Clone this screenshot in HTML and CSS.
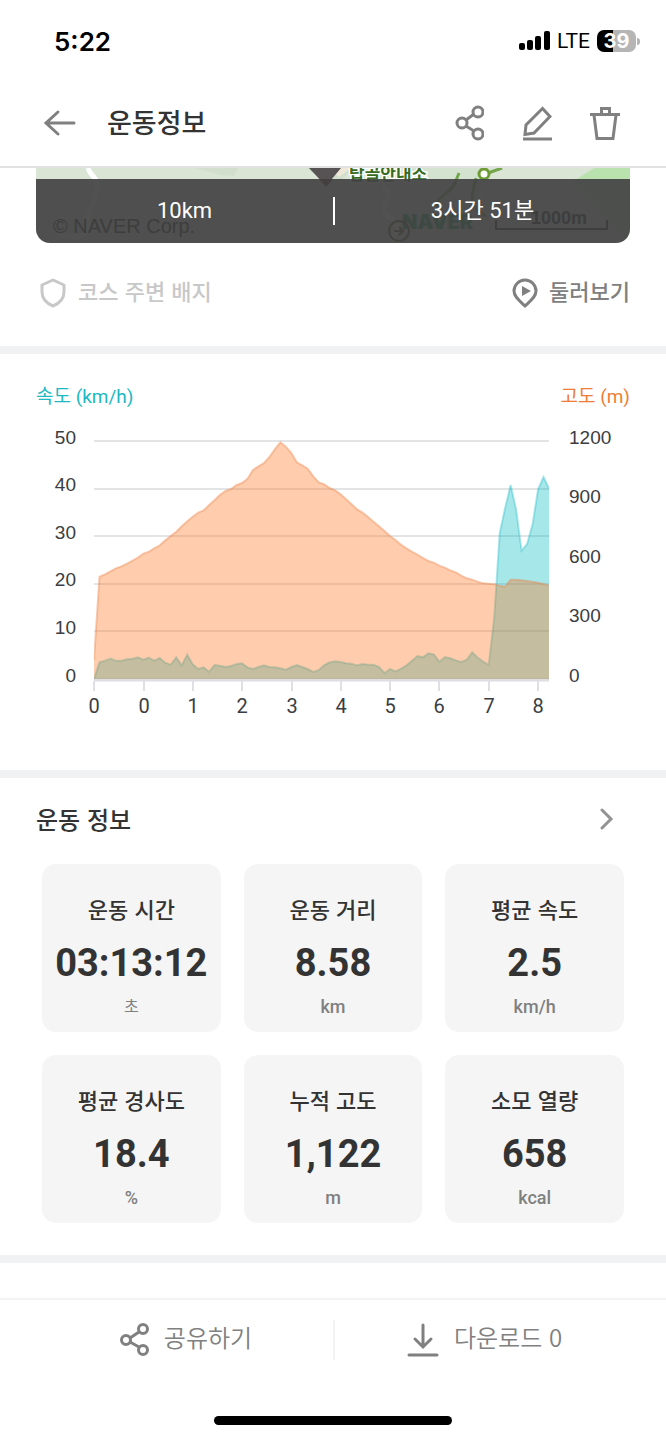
FILE: index.html
```html
<!DOCTYPE html>
<html lang="ko">
<head>
<meta charset="utf-8">
<meta name="viewport" content="width=device-width, initial-scale=1">
<title>운동정보</title>
<link rel="stylesheet" href="styles.css">
</head>
<body>
<div class="status">
  <span class="clock">5:22</span>
  <div class="status-right">
    <svg width="31" height="20" viewBox="0 0 31 20" aria-hidden="true"><rect x="0" y="12" width="6" height="7" rx="2"/><rect x="8" y="9" width="6" height="10" rx="2"/><rect x="16" y="5" width="6" height="14" rx="2"/><rect x="25" y="0" width="6" height="19" rx="2"/></svg>
    <span class="network">LTE</span>
    <span class="battery">39</span>
  </div>
</div>
<header class="header">
  <button class="icon-button" aria-label="뒤로">
    <svg width="34" height="28" viewBox="0 0 34 28" class="stroke"><path d="M31 14H3M15 3 3 14l12 11" stroke-width="3" stroke-linecap="round"/></svg>
  </button>
  <h1 class="title">운동정보</h1>
  <div class="actions">
    <button class="icon-button" aria-label="공유">
      <svg width="30" height="36" viewBox="0 0 30 36" class="stroke" stroke-width="3"><circle cx="8" cy="18" r="5"/><circle cx="24" cy="7" r="5"/><circle cx="24" cy="29" r="5"/><path d="m12 15 8-6M12 21l8 5"/></svg>
    </button>
    <button class="icon-button" aria-label="편집">
      <svg width="30" height="36" viewBox="0 0 30 36" class="stroke" stroke-width="3"><path d="M20.500 3.500 4 20 3 29.500l9-1.500L28 11.500ZM1 34h29"/></svg>
    </button>
    <button class="icon-button" aria-label="삭제">
      <svg width="30" height="36" viewBox="0 0 30 36" class="stroke" stroke-width="3"><path d="M0 9.500h30M4 10l3 23.500h16L26 10M11.500 9V3.500h8V9"/></svg>
    </button>
  </div>
</header>
<main class="content">
  <section class="course">
    <div class="map">
      <svg class="map-art" viewBox="0 0 594 75" preserveAspectRatio="none" aria-hidden="true">
        <rect width="594" height="75" fill="#dae5d5"/>
        <path d="M160 0h42l-4 8-14-1zM270 0h50l-14 11h-20z" fill="#d2dfcc"/>
        <path d="M330 0h115l-25 75h-90z" fill="#d4e2d0"/>
        <path d="m558 0-22 14 58 61V0z" fill="#b9e2ae"/>
        <path d="M52 0c3 10 12 8 8 26s-10 18-8 30-12 16-30 10" fill="none" stroke="#fff" stroke-width="5"/>
        <path d="M346 18c20 12-12 20 8 32s-10 22 10 24" fill="none" stroke="#fff" stroke-width="5"/>
        <path d="m423 5-4 10c-6 12-20 14-18 24M440 10c-2 14-12 26 10 38M452 5l14-5" fill="none" stroke="#73a54b" stroke-width="3"/>
        <circle cx="448" cy="6" r="5" fill="#fff" stroke="#6d9d32" stroke-width="3"/>
        <path d="M293 0h22l-12 9z" fill="#eee8d8"/>
        <path d="m290 18-17-18h32z" fill="#575254"/>
        <path d="m283 11 7 8 7-8z" fill="#5b302a"/>
        <text x="313" y="12" class="map-place">탑골안내소</text>
        <text x="17" y="65" class="map-credit">© NAVER Corp.</text>
        <text x="366" y="61" class="map-brand">NAVER</text>
        <text x="495" y="56" class="map-scale">1000m</text>
        <path d="M460 52v9h111v-9" fill="none" stroke="#111" stroke-width="2"/>
        <g fill="none" stroke="#604820" stroke-width="2"><circle cx="363" cy="63" r="10"/><path d="M358 63h9m-4-4 4 4-4 4"/></g>
      </svg>
      <div class="summary"><span>10km</span><span>3시간 51분</span></div>
    </div>
    <div class="links">
      <button class="link muted" disabled>
        <svg width="28" height="30" viewBox="0 0 28 30" class="stroke" stroke-width="3" stroke-linejoin="round"><path d="m14 2 11 5v7c0 6-4 11-11 14C7 25 3 20 3 14V7z"/></svg>
        <span>코스 주변 배지</span>
      </button>
      <button class="link">
        <svg width="26" height="32" viewBox="0 0 26 32" class="stroke" stroke-width="3"><path d="M13 29c-5-5-11-9-11-15a11 11 0 0 1 22 0c0 6-6 10-11 15Z"/><path d="m10 9 9 5-9 5z" fill="currentColor" stroke="none"/></svg>
        <span>둘러보기</span>
      </button>
    </div>
  </section>
  <section class="chart-section">
    <div class="legend"><span class="speed">속도 (km/h)</span><span class="altitude">고도 (m)</span></div>
    <svg class="chart" viewBox="0 0 594 300" role="img" aria-label="속도와 고도 그래프">
      <path class="grid" d="M58 21h455M58 69h455M58 116h455M58 164h455M58 211h455"/>
      <path class="axis" d="M58 260h455"/>
      <path class="tick" d="M58 261v10M108 261v10M157 261v10M206 261v10M256 261v10M305 261v10M354 261v10M403 261v10M453 261v10M502 261v10"/>
      <svg x="58" y="21" width="455" height="238" viewBox="0 0 83 714" preserveAspectRatio="none">
        <path class="speed-area" d="M0 714L0 714 1 664 2 659 3 653 4 659 5 659 6 655 7 653 8 649 9 656 10 650 11 659 12 651 13 665 14 671 15 649 16 673 17 641 18 670 19 684 20 679 21 692 22 672 23 674 24 678 25 675 26 669 27 667 28 679 29 684 30 678 31 673 32 678 33 679 34 682 35 686 36 678 37 672 38 678 39 684 40 693 41 687 42 672 43 664 44 661 45 663 46 667 47 668 48 673 49 669 50 671 51 671 52 678 53 696 54 684 55 691 56 683 57 673 58 659 59 645 60 649 61 637 62 640 63 662 64 648 65 652 66 658 67 663 68 656 69 634 70 650 71 662 72 671 73 531 74 277 75 200 76 132 77 205 78 329 79 309 80 250 81 145 82 108 83 142V714Z"/>
        <path class="speed-line" d="M0 714 1 664 2 659 3 653 4 659 5 659 6 655 7 653 8 649 9 656 10 650 11 659 12 651 13 665 14 671 15 649 16 673 17 641 18 670 19 684 20 679 21 692 22 672 23 674 24 678 25 675 26 669 27 667 28 679 29 684 30 678 31 673 32 678 33 679 34 682 35 686 36 678 37 672 38 678 39 684 40 693 41 687 42 672 43 664 44 661 45 663 46 667 47 668 48 673 49 669 50 671 51 671 52 678 53 696 54 684 55 691 56 683 57 673 58 659 59 645 60 649 61 637 62 640 63 662 64 648 65 652 66 658 67 663 68 656 69 634 70 650 71 662 72 671 73 531 74 277 75 200 76 132 77 205 78 329 79 309 80 250 81 145 82 108 83 142"/>
        <path class="altitude-area" d="M0 714L0 656 1 407 2 400 3 391 4 382 5 376 6 368 7 359 8 350 9 338 10 332 11 322 12 313 13 298 14 285 15 272 16 256 17 241 18 227 19 215 20 208 21 192 22 177 23 161 24 150 25 144 26 132 27 126 28 113 29 87 30 76 31 66 32 48 33 24 34 4 35 17 36 36 37 64 38 73 39 83 40 106 41 124 42 130 43 141 44 148 45 160 46 175 47 190 48 205 49 215 50 228 51 242 52 256 53 270 54 285 55 297 56 311 57 322 58 332 59 341 60 351 61 360 62 365 63 374 64 380 65 388 66 394 67 404 68 412 69 416 70 422 71 427 72 428 73 430 74 434 75 437 76 416 77 416 78 418 79 420 80 422 81 425 82 429 83 434V714Z"/>
        <path class="altitude-line" d="M0 656 1 407 2 400 3 391 4 382 5 376 6 368 7 359 8 350 9 338 10 332 11 322 12 313 13 298 14 285 15 272 16 256 17 241 18 227 19 215 20 208 21 192 22 177 23 161 24 150 25 144 26 132 27 126 28 113 29 87 30 76 31 66 32 48 33 24 34 4 35 17 36 36 37 64 38 73 39 83 40 106 41 124 42 130 43 141 44 148 45 160 46 175 47 190 48 205 49 215 50 228 51 242 52 256 53 270 54 285 55 297 56 311 57 322 58 332 59 341 60 351 61 360 62 365 63 374 64 380 65 388 66 394 67 404 68 412 69 416 70 422 71 427 72 428 73 430 74 434 75 437 76 416 77 416 78 418 79 420 80 422 81 425 82 429 83 434"/>
      </svg>
      <g class="label end"><text x="40" y="24">50</text><text x="40" y="71">40</text><text x="40" y="119">30</text><text x="40" y="166">20</text><text x="40" y="214">10</text><text x="40" y="262">0</text></g>
      <g class="label"><text x="533" y="24">1200</text><text x="533" y="83">900</text><text x="533" y="143">600</text><text x="533" y="202">300</text><text x="533" y="262">0</text></g>
      <g class="label distance"><text x="58" y="293">0</text><text x="108" y="293">0</text><text x="157" y="293">1</text><text x="206" y="293">2</text><text x="256" y="293">3</text><text x="305" y="293">4</text><text x="354" y="293">5</text><text x="403" y="293">6</text><text x="453" y="293">7</text><text x="502" y="293">8</text></g>
    </svg>
  </section>
  <section class="stats-section">
    <div class="section-head">
      <h2 class="section-title">운동 정보</h2>
      <button class="icon-button chevron" aria-label="운동 정보 더보기"><svg width="14" height="22" viewBox="0 0 14 22" class="stroke"><path d="m2 2 9 9-9 9" stroke-width="3" stroke-linecap="round"/></svg></button>
    </div>
    <div class="stats">
      <div class="card"><span class="name">운동 시간</span><strong class="value">03:13:12</strong><span class="unit light">초</span></div>
      <div class="card"><span class="name">운동 거리</span><strong class="value">8.58</strong><span class="unit">km</span></div>
      <div class="card"><span class="name">평균 속도</span><strong class="value">2.5</strong><span class="unit">km/h</span></div>
      <div class="card"><span class="name">평균 경사도</span><strong class="value">18.4</strong><span class="unit">%</span></div>
      <div class="card"><span class="name">누적 고도</span><strong class="value">1,122</strong><span class="unit">m</span></div>
      <div class="card"><span class="name">소모 열량</span><strong class="value">658</strong><span class="unit">kcal</span></div>
    </div>
  </section>
</main>
<footer class="footer">
  <div class="footer-actions">
    <button class="footer-button">
      <svg width="30" height="34" viewBox="0 0 30 34" class="stroke" stroke-width="3"><circle cx="7" cy="17" r="4.500"/><circle cx="24" cy="6" r="4.500"/><circle cx="24" cy="27" r="4.500"/><path d="m11 15 9-6M11 19l9 5"/></svg>
      <span>공유하기</span>
    </button>
    <button class="footer-button download">
      <svg width="32" height="34" viewBox="0 0 32 34" class="stroke" stroke-width="3" stroke-linecap="round"><path d="M16 2v22M8 16l8 8 8-8M2 32h28"/></svg>
      <span>다운로드 0</span>
    </button>
  </div>
  <div class="home-bar"></div>
</footer>
</body>
</html>
```

FILE: styles.css
```css
* { box-sizing: border-box; }
body {
  margin: 0;
  min-height: 100vh;
  display: flex;
  flex-direction: column;
  background: #fff;
  color: #333;
  font-family: "Noto Sans CJK KR", sans-serif;
}
h1, h2 { margin: 0; font-weight: 500; }
button { padding: 0; border: 0; background: none; color: #808080; font: inherit; }
svg { display: block; flex: none; }
.stroke { fill: none; stroke: currentColor; }

.status {
  display: flex;
  align-items: center;
  justify-content: space-between;
  height: 80px;
  padding: 2px 26px 0 54px;
  color: #000;
  font-family: Inter, sans-serif;
}
.clock { font-size: 26px; font-weight: 600; }
.status-right { display: flex; align-items: center; gap: 7px; }
.network { font: 21px/24px Roboto, sans-serif; }
.battery {
  position: relative;
  width: 39px;
  margin-right: 4px;
  border-radius: 7px;
  background: linear-gradient(90deg, #000 40%, #b5b5b5 40%);
  color: #fff;
  font-size: 20px;
  font-weight: 700;
  line-height: 22px;
  text-align: center;
}
.battery::after {
  content: "";
  position: absolute;
  top: 8px;
  right: -4px;
  width: 3px;
  height: 7px;
  border-radius: 0 3px 3px 0;
  background: #b5b5b5;
}

.header {
  display: flex;
  align-items: center;
  height: 88px;
  padding: 0 46px 0 43px;
  border-bottom: 2px solid #e2e2e2;
}
.title { margin-left: 30px; padding-bottom: 2px; font-size: 27px; line-height: 40px; }
.actions { display: flex; gap: 38px; margin-left: auto; }

.content { flex: 1; }
.course { padding: 0 36px; }
.map { position: relative; overflow: hidden; border-radius: 0 0 14px 14px; }
.map-art { width: 100%; height: 75px; }
.map-place { font: 700 17px "Noto Sans CJK KR", sans-serif; fill: #386b20; stroke: #fff; stroke-width: 3px; paint-order: stroke; }
.map-credit { font: 20px "Liberation Sans", sans-serif; }
.map-brand { font: 900 20px Inter, sans-serif; fill: #009849; }
.map-scale { font: 700 18px "Liberation Sans", sans-serif; }
.summary {
  position: absolute;
  inset: 11px 0 0;
  display: grid;
  grid-template-columns: 1fr 1fr;
  align-items: center;
  background: rgba(66, 66, 66, .92);
  color: #fff;
  font: 22px/28px Roboto, "Noto Sans CJK KR", sans-serif;
  text-align: center;
}
.summary span + span { border-left: 2px solid #fff; }
.links { display: flex; justify-content: space-between; padding: 34px 0 37px; }
.link { display: flex; align-items: center; gap: 11px; font-size: 22px; font-weight: 500; line-height: 32px; }
.link span, .footer-button span { padding-bottom: 3px; margin-top: -3px; }
.muted { padding-left: 3px; color: #c8c8c8; }

.chart-section { padding: 28px 36px 50px; border-top: 8px solid #f1f2f4; }
.legend { display: flex; justify-content: space-between; font: 19px/30px Roboto, "Noto Sans CJK KR", sans-serif; margin-bottom: 8px; }
.speed { color: #20b8c1; }
.altitude { color: #f17c35; }
.chart { width: 100%; overflow: visible; }
.grid { stroke: #e3e4e6; stroke-width: 2px; }
.axis { stroke: #dedee3; stroke-width: 3px; }
.tick { stroke: #dfe0e4; stroke-width: 2px; }
.speed-area { fill: #00bac3; opacity: .35; }
.altitude-area { fill: #ff7015; opacity: .35; }
.speed-line, .altitude-line { fill: none; stroke-width: 2px; vector-effect: non-scaling-stroke; }
.speed-line { stroke: #00b4be; opacity: .3; }
.altitude-line { stroke: #ed854b; opacity: .4; }
.label { font: 19px "Liberation Sans", sans-serif; fill: #3b3d42; }
.end { text-anchor: end; }
.distance { font: 20px Roboto, sans-serif; text-anchor: middle; }

.stats-section { padding: 24px 36px 32px; border-top: 8px solid #f1f2f4; border-bottom: 8px solid #f1f2f4; }
.section-head { display: flex; align-items: center; justify-content: space-between; }
.section-title { font-size: 24px; line-height: 34px; }
.chevron { padding-right: 16px; color: #939393; }
.stats { display: grid; grid-template-columns: repeat(3, 1fr); gap: 23px; padding: 28px 6px 0; }
.card {
  display: flex;
  flex-direction: column;
  align-items: center;
  padding: 26px 0 11px;
  border-radius: 14px;
  background: #f5f5f5;
}
.name { font-size: 22px; font-weight: 500; line-height: 36px; }
.value { font: 700 38px/46px Roboto, sans-serif; margin: 14px 0 7px; }
.unit { color: #808080; font: 500 18px/28px Roboto, "Noto Sans CJK KR", sans-serif; }
.light { font-size: 16px; font-weight: 400; }

.footer { border-top: 2px solid #f3f3f4; }
.footer-actions { display: grid; grid-template-columns: 1fr 1fr; padding: 20px 0 56px; }
.footer-button {
  display: flex;
  align-items: center;
  justify-content: center;
  gap: 15px;
  padding-left: 38px;
  font-size: 24px;
  font-weight: 350;
  line-height: 40px;
}
.download { padding: 0 32px 0 0; border-left: 2px solid #f3f3f4; }
.home-bar { width: 238px; height: 9px; margin: 0 auto 15px; border-radius: 5px; background: #000; }
```
